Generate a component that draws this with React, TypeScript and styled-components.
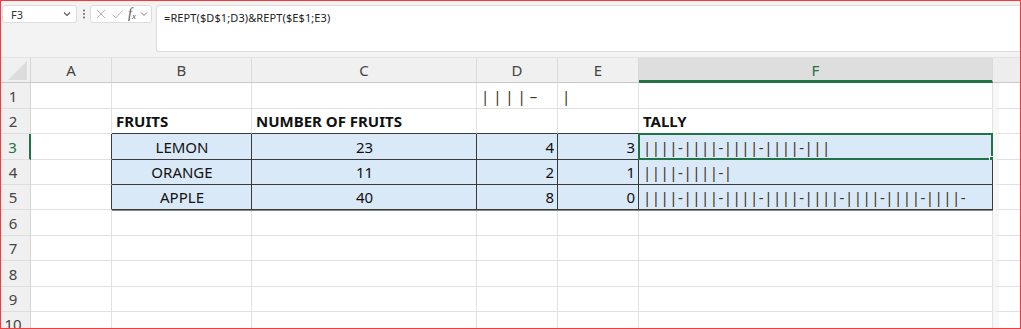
import React from "react";
import styled, { createGlobalStyle, css } from "styled-components";

const GlobalStyle = createGlobalStyle`
  html, body {
    margin: 0;
    padding: 0;
    background: #ffffff;
  }
  * {
    box-sizing: border-box;
  }
`;

const COLS = ["A", "B", "C", "D", "E", "F"];
const ROW_HEIGHTS = [26, 25, 26, 25, 25, 26, 25, 26, 25, 25];

type Align = "left" | "center" | "right";

type CellData = {
  text?: string;
  align?: Align;
  bold?: boolean;
  tally?: boolean;
  spread?: boolean;
};

// one "||||-" group per five
const tally = (n: number) => {
  let s = "";
  for (let i = 1; i <= n; i++) {
    s += "|";
    if (i % 4 === 0) s += "-";
  }
  return s;
};

// sheet content, keyed by "row:col"
const data: Record<string, CellData> = {
  "1:D": { text: "| | | | –", tally: true, spread: true },
  "1:E": { text: "|", tally: true, spread: true },
  "2:B": { text: "FRUITS", bold: true },
  "2:C": { text: "NUMBER OF FRUITS", bold: true },
  "2:F": { text: "TALLY", bold: true },
  "3:B": { text: "LEMON", align: "center" },
  "3:C": { text: "23", align: "center" },
  "3:D": { text: "4", align: "right" },
  "3:E": { text: "3", align: "right" },
  "3:F": { text: tally(16) + "|||", tally: true },
  "4:B": { text: "ORANGE", align: "center" },
  "4:C": { text: "11", align: "center" },
  "4:D": { text: "2", align: "right" },
  "4:E": { text: "1", align: "right" },
  "4:F": { text: tally(8) + "|", tally: true },
  "5:B": { text: "APPLE", align: "center" },
  "5:C": { text: "40", align: "center" },
  "5:D": { text: "8", align: "right" },
  "5:E": { text: "0", align: "right" },
  "5:F": { text: tally(32), tally: true },
};

const inTable = (r: number, c: string) => r >= 3 && r <= 5 && "BCDEF".includes(c);

const App = () => {
  return (
    <>
      <GlobalStyle />
      <Frame>
        <FormulaBar>
          <NameBox>
            <span>F3</span>
            <svg width="10" height="10" viewBox="0 0 10 10">
              <path d="M2 3.5 L5 6.5 L8 3.5" fill="none" stroke="#555" strokeWidth="1.1" />
            </svg>
          </NameBox>
          <Dots>
            <svg width="4" height="12" viewBox="0 0 4 12">
              <circle cx="2" cy="2.5" r="1" fill="#666" />
              <circle cx="2" cy="6" r="1" fill="#666" />
              <circle cx="2" cy="9.5" r="1" fill="#666" />
            </svg>
          </Dots>
          <FnBox>
            <svg width="12" height="12" viewBox="0 0 12 12">
              <path d="M2 2 L10 10 M10 2 L2 10" stroke="#b4b4b4" strokeWidth="1" />
            </svg>
            <svg width="13" height="12" viewBox="0 0 13 12">
              <path d="M1.5 6.5 L4.8 9.8 L11.5 2.5" fill="none" stroke="#b4b4b4" strokeWidth="1" />
            </svg>
            <Fx>
              f<sub>x</sub>
            </Fx>
            <svg width="8" height="8" viewBox="0 0 8 8">
              <path d="M1 2.5 L4 5.5 L7 2.5" fill="none" stroke="#777" strokeWidth="1" />
            </svg>
          </FnBox>
          <FormulaInput>=REPT($D$1;D3)&amp;REPT($E$1;E3)</FormulaInput>
        </FormulaBar>

        <Sheet>
          <Corner>
            <svg width="19" height="19" viewBox="0 0 19 19">
              <path d="M19 0 L19 19 L0 19 Z" fill="#dcdcdc" />
            </svg>
          </Corner>
          {COLS.map((c) => (
            <ColHead key={c} $active={c === "F"}>
              {c}
            </ColHead>
          ))}
          <ColHead $blank />

          {ROW_HEIGHTS.map((h, i) => {
            const r = i + 1;
            return (
              <React.Fragment key={r}>
                <RowHead $active={r === 3} style={{ height: h }}>
                  {r}
                </RowHead>
                {COLS.map((c) => {
                  const d = data[`${r}:${c}`] || {};
                  const boxed = inTable(r, c);
                  const rightDark = boxed || (c === "A" && r >= 3 && r <= 5);
                  const bottomDark = boxed || (r === 2 && "BCDEF".includes(c));
                  return (
                    <Cell
                      key={c}
                      $fill={boxed}
                      $align={d.align || "left"}
                      $bold={!!d.bold}
                      $rightDark={rightDark}
                      $bottomDark={bottomDark}
                      $lastRow={r === 5 && boxed}
                    >
                      {d.tally ? <Tally $spread={!!d.spread}>{d.text}</Tally> : d.text}
                      {r === 3 && c === "F" && (
                        <Selection>
                          <FillHandle />
                        </Selection>
                      )}
                    </Cell>
                  );
                })}
                <Cell $align="left" $bold={false} $rightDark={false} $bottomDark={false} $fill={false} $edge />
              </React.Fragment>
            );
          })}
        </Sheet>
      </Frame>
    </>
  );
};

export default App;

const Frame = styled.div`
  width: 1021px;
  height: 329px;
  border: 1px solid #f53b3b;
  background: #f3f3f3;
  overflow: hidden;
  display: flex;
  flex-direction: column;
  font-family: "Noto Sans", "Liberation Sans", sans-serif;
`;

const FormulaBar = styled.div`
  height: 57px;
  flex-shrink: 0;
  display: flex;
  align-items: flex-start;
  padding: 4px 0 0 1px;
  border-bottom: 1px solid #e2e2e2;
`;

const NameBox = styled.div`
  width: 75px;
  height: 18px;
  background: #ffffff;
  border: 1px solid #dcdcdc;
  border-radius: 3px;
  display: flex;
  align-items: center;
  justify-content: space-between;
  padding: 0 4px 0 8px;
  font-size: 11px;
  color: #333;
`;

const Dots = styled.div`
  width: 13px;
  height: 18px;
  display: flex;
  align-items: center;
  justify-content: center;
`;

const FnBox = styled.div`
  width: 62px;
  height: 18px;
  background: #ffffff;
  border: 1px solid #dcdcdc;
  border-radius: 3px;
  display: flex;
  align-items: center;
  gap: 4px;
  padding: 0 3px 0 4px;
`;

const Fx = styled.span`
  font-family: "Liberation Serif", serif;
  font-style: italic;
  font-size: 14px;
  color: #555;
  line-height: 1;

  sub {
    font-size: 9px;
    vertical-align: -1px;
  }
`;

const FormulaInput = styled.div`
  flex: 1;
  height: 47px;
  margin-left: 4px;
  background: #ffffff;
  border: 1px solid #dcdcdc;
  border-right: none;
  border-radius: 3px 0 0 3px;
  padding: 4px 7px;
  font-size: 11px;
  color: #222;
  letter-spacing: 0.1px;
`;

const Sheet = styled.div`
  display: grid;
  grid-template-columns: 30px 81px 140px 225px 81px 81px 354px 1fr;
  grid-auto-rows: auto;
  background: #ffffff;
`;

const Corner = styled.div`
  height: 25px;
  background: #f0f0f0;
  border-right: 1px solid #d4d4d4;
  border-bottom: 1px solid #c8c8c8;
  display: flex;
  align-items: flex-end;
  justify-content: flex-end;
  padding: 0 3px 2px 0;
`;

const ColHead = styled.div<{ $active?: boolean; $blank?: boolean }>`
  height: 25px;
  background: #f0f0f0;
  border-right: 1px solid #dadada;
  border-bottom: 1px solid #c8c8c8;
  display: flex;
  align-items: center;
  justify-content: center;
  font-size: 15px;
  color: #444;
  ${({ $active }) =>
    $active &&
    css`
      background: #dedede;
      color: #217346;
      border-bottom: 3px solid #217346;
      padding-top: 2px;
    `}
  ${({ $blank }) =>
    $blank &&
    css`
      background: #ededed;
      border-right: none;
    `}
`;

const RowHead = styled.div<{ $active: boolean }>`
  background: #f0f0f0;
  border-right: 1px solid #d4d4d4;
  border-bottom: 1px solid #dedede;
  display: flex;
  align-items: center;
  justify-content: center;
  padding-right: 5px;
  font-size: 15px;
  color: #444;
  ${({ $active }) =>
    $active &&
    css`
      color: #217346;
      border-right: 2px solid #217346;
    `}
`;

const Cell = styled.div<{
  $align: Align;
  $bold: boolean;
  $fill: boolean;
  $rightDark: boolean;
  $bottomDark: boolean;
  $lastRow?: boolean;
  $edge?: boolean;
}>`
  position: relative;
  display: flex;
  align-items: center;
  justify-content: ${({ $align }) =>
    $align === "center" ? "center" : $align === "right" ? "flex-end" : "flex-start"};
  padding: 0 3px 0 4px;
  white-space: nowrap;
  overflow: visible;
  font-size: 15px;
  font-weight: ${({ $bold }) => ($bold ? 700 : 400)};
  color: #111;
  background: ${({ $fill }) => ($fill ? "#dae9f8" : "#ffffff")};
  border-right: 1px solid ${({ $rightDark }) => ($rightDark ? "#3a3a3a" : "#e1e1e1")};
  border-bottom: 1px solid ${({ $bottomDark }) => ($bottomDark ? "#3a3a3a" : "#e1e1e1")};
  ${({ $lastRow }) =>
    $lastRow &&
    css`
      box-shadow: 0 1px 0 #8a8a8a;
      z-index: 1;
    `}
  ${({ $edge }) =>
    $edge &&
    css`
      border-right: none;
      border-left: 6px solid #f7f7f7;
    `}
`;

const Tally = styled.span<{ $spread: boolean }>`
  color: #3f3222;
  letter-spacing: ${({ $spread }) => ($spread ? "0" : "0.5px")};
`;

const Selection = styled.div`
  position: absolute;
  left: -1px;
  top: -1px;
  right: -1px;
  bottom: -1px;
  border: 2px solid #217346;
  pointer-events: none;
`;

const FillHandle = styled.div`
  position: absolute;
  right: -4px;
  bottom: -4px;
  width: 6px;
  height: 6px;
  background: #217346;
  border: 1px solid #ffffff;
`;
